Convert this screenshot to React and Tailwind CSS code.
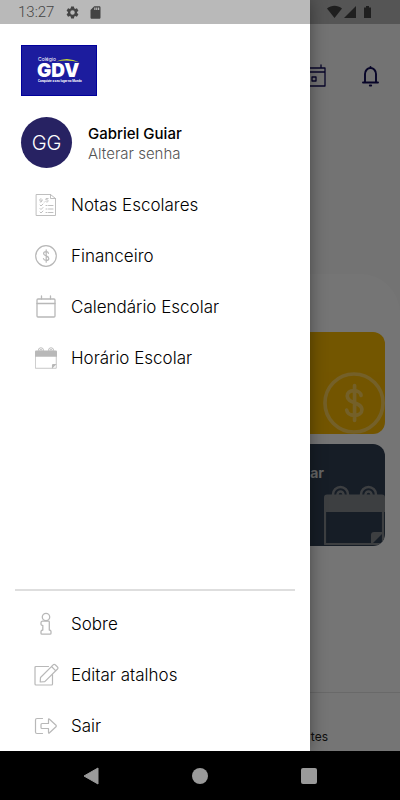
import React from "react";

const line = { fill: "none", stroke: "currentColor", strokeLinecap: "round", strokeLinejoin: "round" };

function GearIcon() {
  return (
    <svg viewBox="0 0 24 24" className="size-[15px]" fill="currentColor" aria-hidden="true">
      <path d="M19.14 12.94c.04-.3.06-.61.06-.94 0-.32-.02-.64-.07-.94l2.03-1.58a.49.49 0 0 0 .12-.61l-1.92-3.32a.49.49 0 0 0-.59-.22l-2.39.96c-.5-.38-1.03-.7-1.62-.94l-.36-2.54a.48.48 0 0 0-.48-.41h-3.84c-.24 0-.43.17-.47.41l-.36 2.54c-.59.24-1.13.57-1.62.94l-2.39-.96a.48.48 0 0 0-.59.22L2.74 8.87c-.12.21-.08.47.12.61l2.03 1.58c-.05.3-.09.63-.09.94s.02.64.07.94l-2.03 1.58a.49.49 0 0 0-.12.61l1.92 3.32c.12.22.37.29.59.22l2.39-.96c.5.38 1.03.7 1.62.94l.36 2.54c.05.24.24.41.48.41h3.84c.24 0 .44-.17.47-.41l.36-2.54c.59-.24 1.13-.56 1.62-.94l2.39.96c.22.08.47 0 .59-.22l1.92-3.32a.48.48 0 0 0-.12-.61l-2.01-1.58zM12 15.6A3.6 3.6 0 1 1 12 8.400a3.600 3.600 0 0 1 0 7.200z" />
    </svg>
  );
}

function SdIcon() {
  return (
    <svg viewBox="0 0 24 24" className="size-[15px]" fill="currentColor" aria-hidden="true">
      <path d="M18 2h-8L4.020 8 4 20c0 1.100.9 2 2 2h12c1.100 0 2-.9 2-2V4c0-1.100-.9-2-2-2zm-6 6h-2V4h2v4zm3 0h-2V4h2v4zm3 0h-2V4h2v4z" />
    </svg>
  );
}

function SignalIcons() {
  return (
    <svg viewBox="0 0 46 14" className="h-[14px] w-[46px]" fill="currentColor" aria-hidden="true">
      <path d="M0 3.500C4.500-.2 10.500-.2 15 3.500L7.500 13z" />
      <path d="M17 13 29 1v12z" />
      <path d="M37 2.500h2V1h3v1.500h2V13h-7z" />
    </svg>
  );
}

function Logo() {
  return (
    <svg viewBox="0 0 76 51" className="h-[51px] w-[76px]" role="img" aria-label="Colégio GDV">
      <rect width="76" height="51" fill="#00009c" />
      <rect x="1" y="1" width="74" height="49" fill="#1c1c9e" />
      <text x="17" y="16" fill="#fff" fontSize="5" fontFamily="Inter, sans-serif">Colégio</text>
      <path d="M35 16.500q12-5.500 23.500 1-11-3.500-23.500-1z" fill="#c8dc32" />
      <text x="16" y="32" fill="#fff" fontSize="19" fontWeight="900" fontFamily="Inter, sans-serif">GDV</text>
      <text x="17" y="37" fill="#fff" fontSize="3" fontWeight="700" fontFamily="Roboto, sans-serif">Conquiste o seu lugar no Mundo</text>
    </svg>
  );
}

function GradesIcon() {
  return (
    <svg viewBox="0 0 24 24" className="size-6" {...line} strokeWidth=".9">
      <path d="M2.500 1.500h14l5 4v17h-19zM16.500 1.500v4h5" />
      <path d="m6 12 1 1 2-2M6 15.500l1 1 2-2M6 19l1 1 2-2M12 12.500h1M14.500 12.500H19M12 16h1M14.500 16H19M12 19.500h1M14.500 19.500H19" />
      <path d="M8 7.500a1.200 1.200 0 1 1 0-1v1l-.7 1.500H6.200M10.200 9h.1M14.200 5.500H12l-.2 1.500c1.500-.5 2.500 0 2.400 1s-1.400 1.300-2.400.7" strokeWidth=".8" />
    </svg>
  );
}

function DollarIcon({ className = "size-6", thin = "1.2" }) {
  return (
    <svg viewBox="1 1 22 22" className={className} {...line} strokeWidth={thin} aria-hidden="true">
      <circle cx="12" cy="12" r="10.300" />
      <path d="M12.200 5.800v12.400M14.500 9.300a2.500 2 0 0 0-2.500-1.700c-1.600 0-2.400.9-2.400 1.900 0 2.900 5.200 1.900 5.200 4.900 0 1.200-1.100 2-2.600 2-1.600 0-2.600-.8-2.800-1.900" />
    </svg>
  );
}

function CalendarIcon() {
  return (
    <svg viewBox="0 0 24 24" className="size-6" {...line} strokeWidth="1.300">
      <rect x="3" y="4" width="18" height="18" rx="1" />
      <path d="M3 8.500h18M7.500 1v3M16.500 1v3" />
    </svg>
  );
}

function ScheduleIcon({ className = "size-[22px]" }) {
  return (
    <svg viewBox="0 0 61 61" className={className} {...line} aria-hidden="true">
      <path d="M9 9.500a7.500 7.500 0 0 1 15 0M37 9.500a7.500 7.500 0 0 1 15 0" strokeWidth="2.500" />
      <path d="M13.500 9.500a3 3 0 0 1 6 0M41.500 9.500a3 3 0 0 1 6 0" strokeWidth="2.500" />
      <path d="M1 14v45h58V14" strokeWidth="2.200" />
      <path d="M3 9.500h55q3 0 3 3V27H0V12.500q0-3 3-3z" fill="currentColor" stroke="none" />
      <path d="M60 47H50q-3 0-3 3v10z" fill="currentColor" stroke="none" />
    </svg>
  );
}

function InfoIcon() {
  return (
    <svg viewBox="0 0 24 24" className="size-6" {...line} strokeWidth="1.300">
      <circle cx="12" cy="5" r="3.700" />
      <path d="M8.500 9.200h6q.8 0 .8.800v8q1.700.3 1.700 1.500v1.700q0 1-1 1H8q-1 0-1-1v-1.700q0-1.200 1.800-1.500v-4.500Q7 13.300 7 12.200v-1.500q0-1.200 1.500-1.500z" />
    </svg>
  );
}

function EditIcon() {
  return (
    <svg viewBox="0 0 26 24" className="h-6 w-[26px]" {...line} strokeWidth="1.200">
      <path d="M15.500 3.500H3q-1 0-1 1V21q0 1 1 1h15.500q1 0 1-1v-9.500" />
      <path d="m7.500 14.500 12.700-12.700q1-.9 2 0L24.500 4q.9 1 0 2L11.800 18.700l-4.600.3zM18.500 3.500l4.300 4.300" />
    </svg>
  );
}

function ExitIcon() {
  return (
    <svg viewBox="0 0 24 24" className="size-6" {...line} strokeWidth="1.200">
      <path d="M8.500 4.500H3q-1.500 0-1.500 1.500v12q0 1.500 1.500 1.500h5.500M8 9.500h6.500v-4q0-1.200 1-.3l6.500 6q.7.800 0 1.600l-6.500 6q-1 .9-1-.3v-4H8q-1 0-1-1v-3q0-1 1-1z" />
    </svg>
  );
}

function MenuItem({ icon, label }) {
  return (
    <li>
      <button type="button" className="flex h-[51px] w-full items-center gap-[10px] px-[31px] text-left">
        <span className="flex w-[30px] justify-center text-[#b8b8b8]" aria-hidden="true">{icon}</span>
        <span className="text-[17px] leading-6 font-light text-black">{label}</span>
      </button>
    </li>
  );
}

function Drawer() {
  return (
    <aside className="absolute inset-y-0 left-0 flex w-[310px] flex-col bg-white shadow-[0_0_16px_rgba(0,0,0,0.4)]">
      <div className="flex h-6 shrink-0 items-center gap-2 bg-[#b9b9b9] pl-[18px] text-[#444]">
        <span className="w-[39px] font-[Roboto,sans-serif] text-[15px] font-light">13:27</span>
        <GearIcon />
        <SdIcon />
      </div>
      <div className="px-[21px] pt-[21px]">
        <Logo />
        <div className="mt-[21px] flex items-center gap-4">
          <span className="flex size-[51px] shrink-0 items-center justify-center rounded-full bg-[#272262] text-xl font-light text-white">GG</span>
          <div className="flex flex-col items-start pt-0.5">
            <span className="text-[15px] leading-5 font-medium text-black">Gabriel Guiar</span>
            <button type="button" className="text-[15px] leading-5 font-light text-[#555]">Alterar senha</button>
          </div>
        </div>
      </div>
      <ul className="mt-[11px] flex-1">
        <MenuItem icon={<GradesIcon />} label="Notas Escolares" />
        <MenuItem icon={<DollarIcon className="size-[22px]" />} label="Financeiro" />
        <MenuItem icon={<CalendarIcon />} label="Calendário Escolar" />
        <MenuItem icon={<ScheduleIcon />} label="Horário Escolar" />
      </ul>
      <hr className="mx-[15px] mb-[7px] border-t-2 border-[#dedede]" />
      <ul>
        <MenuItem icon={<InfoIcon />} label="Sobre" />
        <MenuItem icon={<EditIcon />} label="Editar atalhos" />
        <MenuItem icon={<ExitIcon />} label="Sair" />
      </ul>
    </aside>
  );
}

function HomePage() {
  return (
    <div className="flex flex-1 flex-col bg-[#fbfbfb]">
      <div className="flex h-6 items-center justify-end bg-[#b9b9b9] pr-[27px] text-[#444]">
        <SignalIcons />
      </div>
      <header className="flex h-[104px] items-center justify-end gap-8 pr-[18px] text-[#100b58]">
        <svg viewBox="0 0 24 24" className="size-6" {...line} strokeWidth="1.300" aria-hidden="true">
          <path d="M2 4h21v18H2zM2 8h21M7 1v3M19 1v3M10 13h4v4h-4z" />
        </svg>
        <svg viewBox="0 0 24 24" className="size-6" {...line} strokeWidth="1.900" aria-hidden="true">
          <path d="M5 18.500h15M7 18.500V10a5.500 6 0 0 1 11 0v8.500M12.500 3.500V3M11.800 21.500h1.400" />
        </svg>
      </header>
      <main className="mt-[146px] flex flex-1 flex-col gap-[10px] rounded-tr-[40px] bg-white px-[15px] pt-[58px]">
        <section className="flex h-[102px] items-end justify-end overflow-hidden rounded-xl bg-[#fabb00] text-white">
          <DollarIcon className="size-[62px] opacity-35" thin="1.3" />
        </section>
        <section className="flex h-[102px] flex-col items-end justify-between overflow-hidden rounded-xl bg-[#303f53]">
          <h2 className="pt-[19px] pr-[61px] text-sm leading-5 font-bold text-[#ddd]">ar</h2>
          <ScheduleIcon className="size-[61px] shrink-0 text-[#85898f]" />
        </section>
      </main>
      <footer className="flex h-[59px] items-end justify-end border-t border-[#e4e4e4] bg-white pr-[72px] pb-1">
        <span className="text-xs leading-5 text-[#222]">tes</span>
      </footer>
    </div>
  );
}

export default function App() {
  return (
    <div className="flex min-h-screen flex-col overflow-hidden bg-black font-[Inter,sans-serif]">
      <div className="relative flex flex-1 flex-col overflow-hidden">
        <HomePage />
        <div className="absolute inset-0 bg-black/54" />
        <Drawer />
      </div>
      <nav className="flex h-[49px] items-center justify-center gap-[93px] text-[#9a9a9a]">
        <button type="button" aria-label="Voltar">
          <svg viewBox="0 0 16 18" className="h-[18px] w-4" fill="currentColor"><path d="M15 1v16L1 9z" stroke="currentColor" strokeLinejoin="round" /></svg>
        </button>
        <button type="button" aria-label="Início" className="size-4 rounded-full bg-[#9a9a9a]" />
        <button type="button" aria-label="Recentes" className="size-4 rounded-xs bg-[#9a9a9a]" />
      </nav>
    </div>
  );
}
